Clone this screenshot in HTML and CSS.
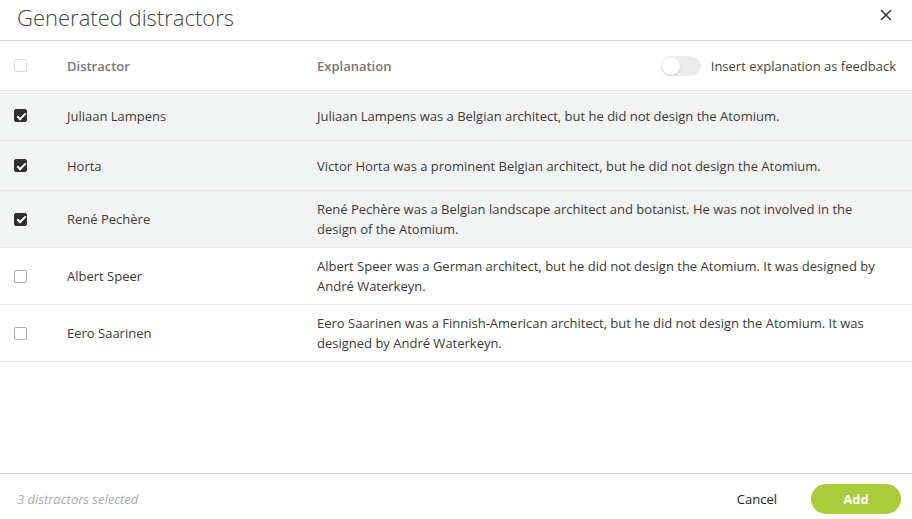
FILE: index.html
```html
<!DOCTYPE html>
<html lang="en">
  <head>
    <meta charset="UTF-8" />
    <meta name="viewport" content="width=device-width, initial-scale=1.0" />
    <title>Generated distractors</title>
    <link rel="stylesheet" href="styles.css">
  </head>
  <body>
    <div class="dialog">
      <div class="dialog-header">
        <h1>Generated distractors</h1>
        <button class="close" aria-label="Close">
          <svg width="12" height="12" viewBox="0 0 12 12">
            <path d="M1 1 L11 11 M11 1 L1 11" stroke="#333" stroke-width="1.5" fill="none" />
          </svg>
        </button>
      </div>

      <div class="table">
        <div class="row head">
          <span class="check disabled"></span>
          <span class="col-name">Distractor</span>
          <span class="col-expl">Explanation</span>
          <label class="feedback">
            <span class="toggle"><span class="knob"></span></span>
            Insert explanation as feedback
          </label>
        </div>

        <div class="row selected">
          <span class="check on"></span>
          <span>Juliaan Lampens</span>
          <span>Juliaan Lampens was a Belgian architect, but he did not design the Atomium.</span>
        </div>
        <div class="row selected">
          <span class="check on"></span>
          <span>Horta</span>
          <span>Victor Horta was a prominent Belgian architect, but he did not design the Atomium.</span>
        </div>
        <div class="row selected">
          <span class="check on"></span>
          <span>René Pechère</span>
          <span>René Pechère was a Belgian landscape architect and botanist. He was not involved in the design of the Atomium.</span>
        </div>
        <div class="row">
          <span class="check"></span>
          <span>Albert Speer</span>
          <span>Albert Speer was a German architect, but he did not design the Atomium. It was designed by André Waterkeyn.</span>
        </div>
        <div class="row">
          <span class="check"></span>
          <span>Eero Saarinen</span>
          <span>Eero Saarinen was a Finnish-American architect, but he did not design the Atomium. It was designed by André Waterkeyn.</span>
        </div>
      </div>

      <div class="dialog-footer">
        <span class="count">3 distractors selected</span>
        <button class="cancel">Cancel</button>
        <button class="add">Add</button>
      </div>
    </div>
  </body>
</html>
```

FILE: styles.css
```css
body {
  margin: 0;
  font-family: "Open Sans", sans-serif;
  font-size: 13px;
  color: #3a3a3a;
  background: #fff;
}
.dialog {
  width: 912px;
  height: 519px;
  display: flex;
  flex-direction: column;
}
.dialog-header {
  height: 40px;
  border-bottom: 1px solid #d6d6d6;
  display: flex;
  align-items: center;
  justify-content: space-between;
  padding: 0 20px 0 17px;
}
h1 {
  margin: 0 0 6px;
  font-size: 22px;
  font-weight: 300;
  color: #444;
}
.close {
  background: none;
  border: none;
  padding: 0;
  margin-bottom: 10px;
  cursor: pointer;
  line-height: 0;
}
.table {
  flex: 1;
}
.row {
  display: grid;
  grid-template-columns: 53px 250px 1fr;
  align-items: center;
  min-height: 50px;
  box-sizing: border-box;
  padding: 8px 30px 8px 14px;
  border-bottom: 1px solid #e8e8e8;
  line-height: 20px;
}
.row.head {
  grid-template-columns: 53px 250px 1fr auto;
  color: #777;
  font-weight: 600;
  padding-right: 16px;
}
.row.selected {
  background: #f2f3f3;
}
.check {
  width: 11px;
  height: 11px;
  border: 1.5px solid #aaa;
  border-radius: 2px;
  position: relative;
}
.check.disabled {
  border-color: #ddd;
}
.check.on {
  background: #2f2f2f;
  border-color: #2f2f2f;
}
.check.on::after {
  content: "";
  position: absolute;
  left: 3.5px;
  top: 0.5px;
  width: 3px;
  height: 7px;
  border: solid #fff;
  border-width: 0 2px 2px 0;
  transform: rotate(45deg);
}
.feedback {
  display: flex;
  align-items: center;
  gap: 10px;
  font-weight: 400;
  color: #444;
}
.toggle {
  width: 40px;
  height: 20px;
  border-radius: 10px;
  background: #ececec;
  position: relative;
}
.knob {
  position: absolute;
  left: 1px;
  top: 1px;
  width: 18px;
  height: 18px;
  border-radius: 50%;
  background: #fff;
  box-shadow: 0 1px 2px rgba(0, 0, 0, 0.15);
}
.dialog-footer {
  height: 46px;
  box-sizing: border-box;
  border-top: 1px solid #d6d6d6;
  display: flex;
  align-items: center;
  padding: 4px 11px 0 17px;
}
.count {
  flex: 1;
  font-style: italic;
  font-size: 13px;
  color: #aaa;
}
.cancel {
  background: none;
  border: none;
  padding: 0;
  font-family: inherit;
  font-size: 13px;
  font-weight: 400;
  color: #222;
  margin-right: 34px;
  cursor: pointer;
}
.add {
  width: 90px;
  height: 30px;
  border: none;
  border-radius: 15px;
  background: #a8cc3a;
  color: #fff;
  font-family: inherit;
  font-size: 13px;
  font-weight: 700;
  cursor: pointer;
}
```
